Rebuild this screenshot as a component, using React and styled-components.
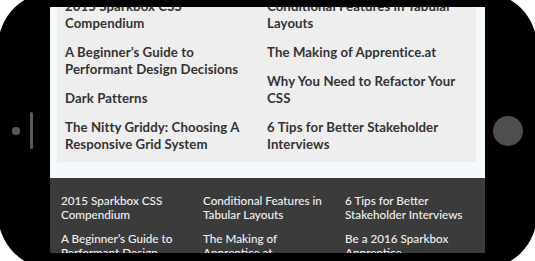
import React from "react";
import styled, { createGlobalStyle } from "styled-components";

const Global = createGlobalStyle`
  html, body {
    margin: 0;
    padding: 0;
    background: #ffffff;
    overflow: hidden;
  }
  #root {
    width: 535px;
    height: 261px;
    overflow: hidden;
  }
`;

const Phone = styled.div`
  display: flex;
  width: 539px;
  height: 277px;
  margin: -8px 0 0 -2px;
  background: #000;
  border-radius: 55px;
`;

const LeftBezel = styled.div`
  width: 52px;
  flex: none;
  display: flex;
  align-items: center;
  gap: 10px;
  padding-left: 14px;
  box-sizing: border-box;
`;

const Camera = styled.span`
  width: 8px;
  height: 8px;
  border-radius: 50%;
  background: #5a5a5a;
`;

const Speaker = styled.span`
  width: 3px;
  height: 37px;
  border-radius: 2px;
  background: #5a5a5a;
`;

const RightBezel = styled.div`
  flex: 1;
  display: flex;
  align-items: center;
  padding-left: 8px;
`;

const HomeButton = styled.span`
  width: 30px;
  height: 30px;
  border-radius: 50%;
  background: #4e4e4e;
`;

const Screen = styled.div`
  width: 435px;
  height: 246px;
  flex: none;
  margin-top: 15px;
  overflow: hidden;
  background: #f4f9fc;
`;

const Page = styled.div`
  margin-top: -22px;
`;

const Panel = styled.div`
  margin: 0 9px 0 7px;
  background: #eeeeee;
  padding: 12.5px 7px 9.5px 8px;
  display: grid;
  grid-template-columns: 202px 1fr;
`;

const PanelColumn = styled.div`
  display: flex;
  flex-direction: column;
  gap: 12px;
`;

const PanelLink = styled.a`
  display: block;
  white-space: pre-line;
  font-family: Lato, "Open Sans", sans-serif;
  font-weight: 700;
  font-size: 13.2px;
  letter-spacing: 0.1px;
  line-height: 17px;
  color: #333333;
  text-decoration: none;
`;

const Footer = styled.div`
  margin-top: 16px;
  background: #3b3b3b;
  padding: 14.5px 0 20px 11px;
  display: grid;
  grid-template-columns: 142px 142px 1fr;
  row-gap: 10.5px;
`;

const FooterLink = styled.a`
  display: block;
  white-space: pre-line;
  font-family: Lato, "Open Sans", sans-serif;
  font-weight: 500;
  font-size: 11.7px;
  line-height: 14px;
  color: #f2f2f2;
  text-decoration: none;
`;

const leftItems = [
  "2015 Sparkbox CSS\nCompendium",
  "A Beginner’s Guide to\nPerformant Design Decisions",
  "Dark Patterns",
  "The Nitty Griddy: Choosing A\nResponsive Grid System",
];

const rightItems = [
  "Conditional Features in Tabular\nLayouts",
  "The Making of Apprentice.at",
  "Why You Need to Refactor Your\nCSS",
  "6 Tips for Better Stakeholder\nInterviews",
];

const footerItems = [
  "2015 Sparkbox CSS\nCompendium",
  "Conditional Features in\nTabular Layouts",
  "6 Tips for Better\nStakeholder Interviews",
  "A Beginner’s Guide to\nPerformant Design\nDecisions",
  "The Making of\nApprentice.at",
  "Be a 2016 Sparkbox\nApprentice",
];

export default function App() {
  return (
    <>
      <Global />
      <Phone>
        <LeftBezel>
          <Camera />
          <Speaker />
        </LeftBezel>
        <Screen>
          <Page>
            <Panel>
              <PanelColumn>
                {leftItems.map((t) => (
                  <PanelLink key={t} href="#">{t}</PanelLink>
                ))}
              </PanelColumn>
              <PanelColumn>
                {rightItems.map((t) => (
                  <PanelLink key={t} href="#">{t}</PanelLink>
                ))}
              </PanelColumn>
            </Panel>
            <Footer>
              {footerItems.map((t) => (
                <FooterLink key={t} href="#">{t}</FooterLink>
              ))}
            </Footer>
          </Page>
        </Screen>
        <RightBezel>
          <HomeButton />
        </RightBezel>
      </Phone>
    </>
  );
}
